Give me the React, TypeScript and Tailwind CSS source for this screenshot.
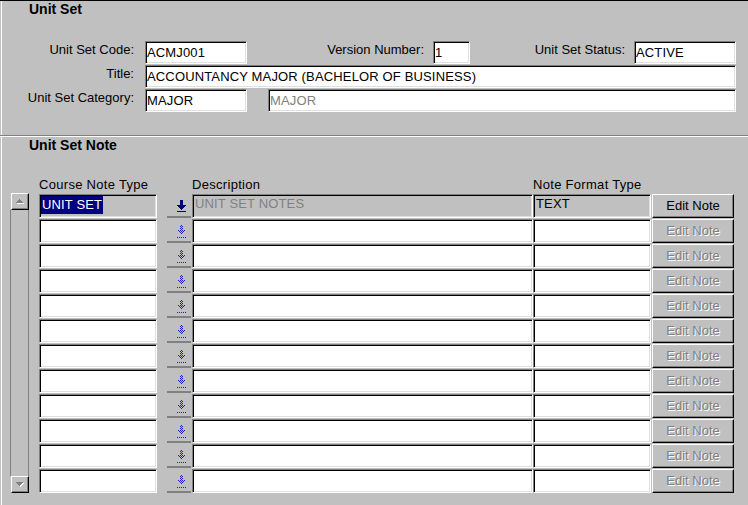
import React from "react";

const sunken =
  "border border-t-[#808080] border-l-[#808080] border-b-white border-r-white shadow-[inset_1px_1px_0_#000,inset_-1px_-1px_0_#dfdfdf]";
const raised =
  "border border-t-white border-l-white border-b-black border-r-black shadow-[inset_-1px_-1px_0_#808080]";

function Label({ className, children }: { className: string; children: React.ReactNode }) {
  return <div className={`${className} shrink-0 text-right leading-[16px] pt-[1px]`}>{children}</div>;
}

function TopField({ className, children, gray }: { className: string; children?: React.ReactNode; gray?: boolean }) {
  return (
    <div className={`${className} h-[23px] shrink-0 bg-white ${sunken} pl-[1px] leading-[21px] tracking-[0.15px] whitespace-nowrap overflow-hidden ${gray ? "text-[#808080]" : "text-black"}`}>
      {children}
    </div>
  );
}

const arrowMask: Array<[number, number, number]> = [
  [0, 3, 3],
  [1, 3, 3],
  [2, 3, 3],
  [3, 3, 3],
  [4, 3, 3],
  [5, 0, 9],
  [6, 1, 7],
  [7, 2, 5],
  [8, 3, 3],
  [9, 4, 1],
];

function SolidArrow() {
  return (
    <svg width="9" height="12" viewBox="0 0 9 12" shapeRendering="crispEdges" className="block">
      <g fill="#000080">
        {arrowMask.map(([y, x, w]) => (
          <rect key={y} x={x} y={y} width={w} height={1} />
        ))}
        <rect x="0" y="11" width="9" height="1" />
      </g>
    </svg>
  );
}

function DitherArrow() {
  const pts: Array<[number, number]> = [];
  arrowMask.forEach(([y, x, w]) => {
    for (let px = x; px < x + w; px++) {
      if ((px + y) % 2 === 0) pts.push([px, y]);
    }
  });
  for (let px = 0; px < 9; px++) if ((px + 12) % 2 === 0) pts.push([px, 12]);
  return (
    <svg width="9" height="13" viewBox="0 0 9 13" shapeRendering="crispEdges" className="block">
      <g fill="#1f1fc8">
        {pts.map(([x, y]) => (
          <rect key={`${x}-${y}`} x={x} y={y} width={1} height={1} />
        ))}
      </g>
    </svg>
  );
}

function Tri({ up }: { up?: boolean }) {
  const rowsUp: Array<[number, number, number]> = [
    [0, 3, 1],
    [1, 2, 3],
    [2, 1, 5],
    [3, 0, 7],
  ];
  const rows = up ? rowsUp : rowsUp.map(([y, x, w]) => [3 - y, x, w] as [number, number, number]);
  return (
    <svg width="8" height="5" viewBox="0 0 8 5" shapeRendering="crispEdges" className="block">
      <g fill="#ffffff" transform="translate(1,1)">
        {rows.map(([y, x, w]) => (
          <rect key={y} x={x} y={y} width={w} height={1} />
        ))}
      </g>
      <g fill="#808080">
        {rows.map(([y, x, w]) => (
          <rect key={y} x={x} y={y} width={w} height={1} />
        ))}
      </g>
    </svg>
  );
}

export default function App() {
  const rows = Array.from({ length: 12 }, (_, i) => i);
  return (
    <div className="w-[748px] h-[505px] bg-[#c0c0c0] border-t border-black overflow-hidden font-['Liberation_Sans',Arial,sans-serif] text-[13px] text-black">
      <div className="ml-px h-full border-l border-white flex flex-col">
        {/* Unit Set section */}
        <section className="h-[134px] shrink-0 flex flex-col">
          <div className="pl-[27px] font-bold text-[14px] leading-[16px]">Unit Set</div>
          <div className="mt-[24px] flex flex-col gap-[1px]">
            <div className="flex items-start">
              <Label className="w-[132px]">Unit Set Code:</Label>
              <TopField className="ml-[11px] w-[102px]">ACMJ001</TopField>
              <Label className="w-[177px]">Version Number:</Label>
              <TopField className="ml-[9px] w-[37px]">1</TopField>
              <Label className="w-[155px]">Unit Set Status:</Label>
              <TopField className="ml-[9px] w-[102px]">ACTIVE</TopField>
            </div>
            <div className="flex items-start">
              <Label className="w-[132px]">Title:</Label>
              <TopField className="ml-[11px] w-[591px]">ACCOUNTANCY MAJOR (BACHELOR OF BUSINESS)</TopField>
            </div>
            <div className="flex items-start">
              <Label className="w-[132px]">Unit Set Category:</Label>
              <TopField className="ml-[11px] w-[102px]">MAJOR</TopField>
              <TopField className="ml-[21px] w-[468px]" gray>
                MAJOR
              </TopField>
            </div>
          </div>
        </section>
        <div className="h-px bg-[#808080] -ml-[2px] shrink-0" />
        <div className="h-px bg-white -ml-[2px] shrink-0" />

        {/* Unit Set Note section */}
        <section className="flex flex-col">
          <div className="pl-[27px] font-bold text-[14px] leading-[16px]">Unit Set Note</div>
          <div className="mt-[24px] h-[16px] flex leading-[16px] whitespace-nowrap tracking-[0.3px]">
            <div className="ml-[37px] w-[153px]">Course Note Type</div>
            <div className="w-[341px]">Description</div>
            <div className="w-[118px]">Note Format Type</div>
          </div>
          <div className="flex">
            {/* scrollbar */}
            <div className="ml-[8px] w-[19px] h-[300px] flex flex-col shrink-0">
              <div className={`h-[17px] ml-px w-[18px] bg-[#c0c0c0] ${raised} flex items-center justify-center`}>
                <Tri up />
              </div>
              <div className="flex-1 border-x border-[#808080]" />
              <div className={`h-[17px] ml-px w-[18px] bg-[#c0c0c0] ${raised} flex items-center justify-center`}>
                <Tri />
              </div>
            </div>
            {/* grid rows */}
            <div className="ml-[10px] pt-px flex flex-col gap-[1px]">
              {rows.map((i) => {
                const first = i === 0;
                return (
                  <div key={i} className="flex h-[24px]">
                    <div className={`w-[118px] h-[24px] ${first ? "bg-[#c0c0c0]" : "bg-white"} ${sunken} pl-px whitespace-nowrap overflow-hidden tracking-[0.15px]`}>
                      {first && (
                        <span className="inline-block bg-[#000080] text-white leading-[18px] px-px">UNIT SET</span>
                      )}
                    </div>
                    <div className="ml-[10px] w-[24px] h-[24px] border-b-2 border-[#808080] flex items-start justify-start pl-[10px] pt-[6px]">
                      {first ? <SolidArrow /> : <DitherArrow />}
                    </div>
                    <div className={`ml-px w-[341px] h-[24px] ${first ? "bg-[#c0c0c0] text-[#808080]" : "bg-white"} ${sunken} pl-[2px] leading-[18px] tracking-[0.15px] whitespace-nowrap overflow-hidden`}>
                      {first ? "UNIT SET NOTES" : ""}
                    </div>
                    <div className={`w-[118px] h-[24px] ${first ? "bg-[#c0c0c0]" : "bg-white"} ${sunken} pl-[2px] leading-[18px] tracking-[0.15px] whitespace-nowrap overflow-hidden`}>
                      {first ? "TEXT" : ""}
                    </div>
                    <div className={`ml-px w-[82px] h-[24px] bg-[#c0c0c0] ${raised} flex items-center justify-center leading-[16px] whitespace-nowrap ${first ? "text-black" : "text-[#808080] [text-shadow:1px_1px_0_#ffffff]"}`}>
                      Edit Note
                    </div>
                  </div>
                );
              })}
            </div>
          </div>
        </section>
      </div>
    </div>
  );
}
